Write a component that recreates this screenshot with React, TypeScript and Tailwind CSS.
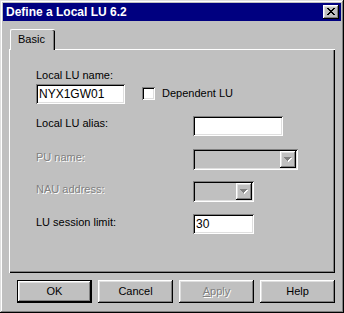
import React from "react";

const raised =
  "shadow-[inset_-1px_-1px_0_#000,inset_1px_1px_0_#fff,inset_-2px_-2px_0_#808080,inset_2px_2px_0_#dfdfdf]";

function CloseGlyph() {
  return (
    <svg width="8" height="7" viewBox="0 0 8 7" shapeRendering="crispEdges">
      <path
        fill="#000"
        d="M0 0h2v1H0zM6 0h2v1H6zM1 1h2v1H1zM5 1h2v1H5zM2 2h4v1H2zM3 3h2v1H3zM2 4h4v1H2zM1 5h2v1H1zM5 5h2v1H5zM0 6h2v1H0zM6 6h2v1H6z"
      />
    </svg>
  );
}

function DisabledArrow() {
  return (
    <svg width="8" height="5" viewBox="0 0 8 5" shapeRendering="crispEdges">
      <path fill="#fff" d="M1 1h7v1H1zM2 2h5v1H2zM3 3h3v1H3zM4 4h1v1H4z" />
      <path fill="#808080" d="M0 0h7v1H0zM1 1h5v1H1zM2 2h3v1H2zM3 3h1v1H3z" />
    </svg>
  );
}

function Combo({ w }: { w: string }) {
  return (
    <div
      className={`${w} h-[21px] bg-[#c0c0c0] shadow-[inset_1px_1px_0_#808080,inset_-1px_-1px_0_#fff,inset_2px_2px_0_#000,inset_-2px_-2px_0_#dfdfdf] flex justify-end p-[2px]`}
    >
      <div className={`w-[16px] h-[17px] bg-[#c0c0c0] ${raised} flex items-center justify-center`}>
        <DisabledArrow />
      </div>
    </div>
  );
}

function Edit({ w, value }: { w: string; value?: string }) {
  return (
    <div
      className={`${w} h-[20px] bg-white shadow-[inset_1px_1px_0_#808080,inset_-1px_-1px_0_#fff,inset_2px_2px_0_#000,inset_-2px_-2px_0_#dfdfdf] flex items-center pl-[3px] text-[12px] leading-[14px]`}
    >
      {value}
    </div>
  );
}

function Btn({ children, def, disabled }: { children: React.ReactNode; def?: boolean; disabled?: boolean }) {
  const inner = (
    <div
      className={`w-full h-full bg-[#c0c0c0] ${raised} flex items-center justify-center ${
        disabled ? "text-[#808080] [text-shadow:1px_1px_0_#fff]" : "text-black"
      }`}
    >
      {children}
    </div>
  );
  return def ? (
    <div className="w-[75px] h-[23px] border border-black">{inner}</div>
  ) : (
    <div className="w-[75px] h-[23px]">{inner}</div>
  );
}

export default function App() {
  return (
    <div
      className="w-[344px] h-[313px] bg-[#c0c0c0] shadow-[inset_-1px_-1px_0_#000,inset_1px_1px_0_#dfdfdf,inset_-2px_-2px_0_#808080,inset_2px_2px_0_#fff] p-[3px] flex flex-col font-['Liberation_Sans',Arial,sans-serif] text-[11px] leading-[13px] text-black"
    >
      <div className="h-[18px] bg-[#000080] flex items-center justify-between pl-[3px] pr-[2px]">
        <span className="text-white font-bold text-[12px] leading-[14px]">Define a Local LU 6.2</span>
        <div className={`w-[16px] h-[14px] bg-[#c0c0c0] ${raised} flex items-center justify-center pb-[1px]`}>
          <CloseGlyph />
        </div>
      </div>

      <div className="mt-[8px] flex">
        <div className="ml-[7px] w-[45px] h-[21px] -mb-[1px] relative z-10 bg-[#c0c0c0] border-l border-t border-white rounded-t-[2px] shadow-[inset_-1px_0_0_#000,inset_-2px_0_0_#808080] flex items-center pl-[7px] pb-[1px]">
          Basic
        </div>
      </div>

      <div className="ml-[6px] w-[326px] h-[224px] border-t border-l border-white shadow-[inset_-1px_-1px_0_#000,inset_-2px_-2px_0_#808080] pl-[26px] pt-[19px] flex flex-col">
        <div>Local LU name:</div>
        <div className="mt-[2px] flex items-center">
          <Edit w="w-[89px]" value="NYX1GW01" />
          <div className="ml-[17px] mb-[2px] w-[13px] h-[13px] bg-white shadow-[inset_1px_1px_0_#808080,inset_-1px_-1px_0_#fff,inset_2px_2px_0_#000,inset_-2px_-2px_0_#dfdfdf]" />
          <span className="ml-[7px] mb-[2px]">Dependent LU</span>
        </div>

        <div className="mt-[12px] flex items-start">
          <div className="w-[157px] mt-[1px]">Local LU alias:</div>
          <Edit w="w-[90px]" />
        </div>

        <div className="mt-[13px] flex items-start">
          <div className="w-[157px] mt-[2px] text-[#808080] [text-shadow:1px_1px_0_#fff]">PU name:</div>
          <Combo w="w-[105px]" />
        </div>

        <div className="mt-[11px] flex items-start">
          <div className="w-[157px] mt-[2px] text-[#808080] [text-shadow:1px_1px_0_#fff]">NAU address:</div>
          <Combo w="w-[61px]" />
        </div>

        <div className="mt-[12px] flex items-start">
          <div className="w-[157px] mt-[2px]">LU session limit:</div>
          <Edit w="w-[61px]" value="30" />
        </div>
      </div>

      <div className="mt-[7px] ml-[14px] flex gap-[6px]">
        <Btn def>OK</Btn>
        <Btn>Cancel</Btn>
        <Btn disabled>
          <span>
            <span className="underline">A</span>pply
          </span>
        </Btn>
        <Btn>Help</Btn>
      </div>
    </div>
  );
}
